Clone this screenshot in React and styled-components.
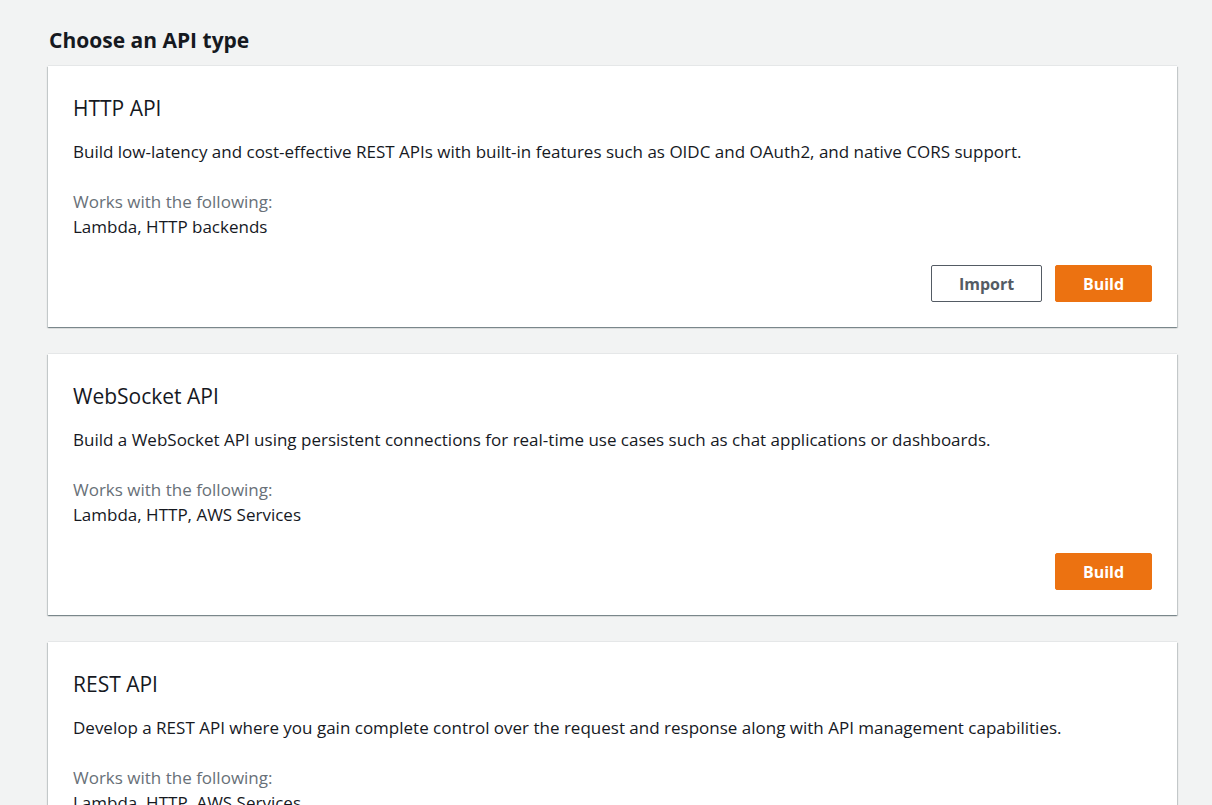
import React from "react";
import styled, { createGlobalStyle } from "styled-components";

const GlobalStyle = createGlobalStyle`
  html, body {
    margin: 0;
    padding: 0;
    background: #f2f3f3;
    font-family: "Open Sans", "Noto Sans", Arial, sans-serif;
    color: #16191f;
  }
`;

const apiTypes = [
  {
    name: "HTTP API",
    description:
      "Build low-latency and cost-effective REST APIs with built-in features such as OIDC and OAuth2, and native CORS support.",
    works: "Lambda, HTTP backends",
    canImport: true,
  },
  {
    name: "WebSocket API",
    description:
      "Build a WebSocket API using persistent connections for real-time use cases such as chat applications or dashboards.",
    works: "Lambda, HTTP, AWS Services",
    canImport: false,
  },
  {
    name: "REST API",
    description:
      "Develop a REST API where you gain complete control over the request and response along with API management capabilities.",
    works: "Lambda, HTTP, AWS Services",
    canImport: true,
  },
];

const App = () => {
  return (
    <>
      <GlobalStyle />
      <Page>
        <Heading>Choose an API type</Heading>
        <CardList>
          {apiTypes.map((api) => (
            <Card key={api.name}>
              <CardTitle>{api.name}</CardTitle>
              <Description>{api.description}</Description>
              <Works>
                <WorksLabel>Works with the following:</WorksLabel>
                <WorksValue>{api.works}</WorksValue>
              </Works>
              <Actions>
                {api.canImport && <Button>Import</Button>}
                <Button primary>Build</Button>
              </Actions>
            </Card>
          ))}
        </CardList>
      </Page>
    </>
  );
};

const Page = styled.div`
  padding: 26px 35px 40px 48px;
  height: 805px;
  box-sizing: border-box;
  overflow: hidden;
`;

const Heading = styled.h2`
  margin: 0 0 12px 1px;
  font-size: 21px;
  line-height: 28px;
  font-weight: 700;
  color: #16191f;
`;

const CardList = styled.div`
  display: flex;
  flex-direction: column;
  gap: 27px;
`;

const Card = styled.div`
  background: #fff;
  padding: 28px 25px 25px 25px;
  box-shadow: 0 1px 1px 0 rgba(0, 28, 36, 0.3),
    1px 1px 1px 0 rgba(0, 28, 36, 0.15),
    -1px 1px 1px 0 rgba(0, 28, 36, 0.15),
    0 -1px 0 0 rgba(0, 28, 36, 0.05);
`;

const CardTitle = styled.h3`
  margin: 0;
  font-size: 21px;
  line-height: 28px;
  font-weight: 400;
  color: #16191f;
`;

const Description = styled.p`
  margin: 19px 0 0 0;
  font-size: 17px;
  line-height: 22px;
  color: #16191f;
`;

const Works = styled.div`
  margin-top: 26px;
  font-size: 17px;
  line-height: 25px;
`;

const WorksLabel = styled.div`
  color: #687078;
`;

const WorksValue = styled.div`
  color: #16191f;
`;

const Actions = styled.div`
  display: flex;
  justify-content: flex-end;
  gap: 13px;
  margin-top: 26px;
`;

const Button = styled.button`
  height: 37px;
  min-width: ${(p) => (p.primary ? "97px" : "111px")};
  padding: 0 20px;
  border-radius: 2px;
  font-family: inherit;
  font-size: 16px;
  font-weight: 700;
  cursor: pointer;
  border: 1px solid ${(p) => (p.primary ? "#ec7211" : "#545b64")};
  background: ${(p) => (p.primary ? "#ec7211" : "#fff")};
  color: ${(p) => (p.primary ? "#fff" : "#545b64")};
`;

export default App;
